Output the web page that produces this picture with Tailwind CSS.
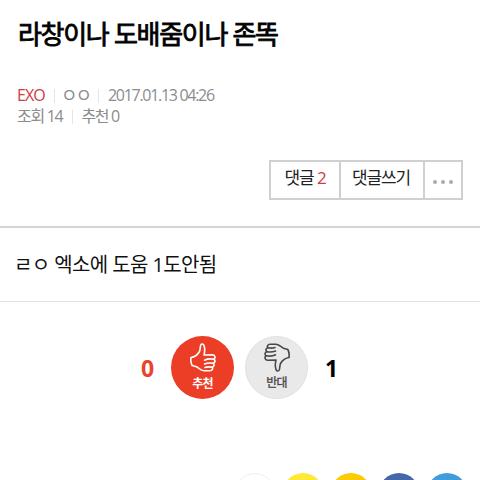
<!DOCTYPE html>
<html lang="ko">
<head>
    <meta charset="UTF-8">
    <meta name="viewport" content="width=device-width, initial-scale=1.0">
    <title>라창이나 도배줌이나 존똑</title>
    <script src="https://cdn.jsdelivr.net/npm/@tailwindcss/browser@4"></script>
</head>
<body class="bg-white font-['Open_Sans','Noto_Sans_CJK_KR',sans-serif] h-[480px] overflow-hidden">
    <!-- 글 제목 -->
    <header class="h-[228px] border-b-2 border-[#d4d4d4] pl-[17px] pr-[17px] pt-[16px]">
        <h1 class="h-[38px] leading-[36px] pl-px text-[26px] font-normal [-webkit-text-stroke:0.8px_#000] tracking-[-1.3px] text-black whitespace-nowrap">라창이나 도배줌이나 존똑</h1>

        <!-- 글 정보 -->
        <div class="mt-[31px] text-[16px] leading-[21px] text-[#8c8c8c] whitespace-nowrap">
            <div class="flex items-center h-[21px]">
                <span class="text-[#d03a42] tracking-[-0.9px]">EXO</span>
                <span class="w-px h-[14px] bg-[#e6e6e6] ml-[9px] mr-[6px]"></span>
                <span class="text-[18px] tracking-[-2px]">ㅇㅇ</span>
                <span class="w-px h-[14px] bg-[#e6e6e6] ml-[8px] mr-[9px]"></span>
                <span class="tracking-[-1.3px]">2017.01.13 04:26</span>
            </div>
            <div class="flex items-center h-[21px] tracking-[-1.3px]">
                <span>조회 14</span>
                <span class="w-px h-[14px] bg-[#e6e6e6] ml-[10px] mr-[8px]"></span>
                <span>추천 0</span>
            </div>
        </div>

        <!-- 댓글 버튼 -->
        <div class="mt-[33px] ml-auto w-[194px] h-[40px] flex border-2 border-[#d0d0d0] text-[17px] leading-[32px] tracking-[-1.1px] text-[#222] whitespace-nowrap">
            <a class="w-[70px] text-center border-r-2 border-[#d0d0d0]">댓글 <span class="text-[#d03a42]">2</span></a>
            <a class="w-[84px] pr-[2px] text-center border-r-2 border-[#d0d0d0]">댓글쓰기</a>
            <a class="flex-1 flex items-center justify-center gap-[4px] pt-[3px]">
                <i class="size-[4px] rounded-full bg-[#aaa]"></i>
                <i class="size-[4px] rounded-full bg-[#aaa]"></i>
                <i class="size-[4px] rounded-full bg-[#aaa]"></i>
            </a>
        </div>
    </header>

    <!-- 본문 -->
    <p class="h-[74px] leading-[74px] border-b border-[#e2e2e2] pl-[14px] text-[20px] tracking-[-0.6px] text-[#111] whitespace-nowrap">ㄹㅇ 엑소에 도움 1도안됨</p>

    <!-- 추천 / 반대 -->
    <section class="flex items-center pt-[34px] pl-[141px] text-[23px] font-bold">
        <span class="w-[30px] pt-[2px] text-[#e8432c]">0</span>
        <button class="size-[63px] rounded-full bg-[#ec3d27] text-white flex flex-col items-center">
            <svg class="w-[26px] h-[29px] mt-[7px]" viewBox="0 0 26 29" fill="none" stroke="currentColor" stroke-width="1.6" stroke-linejoin="round" stroke-linecap="round">
                <path d="M1 14.5 C5 14 8 11 9.5 8.5 C10.5 6 10 4 10.8 2 C11.5 0.5 13.5 0.8 14 2.5 C15 5.5 14.8 9 14 12 L22.5 11.8 C25.5 12 25.8 15.5 23.5 16.2 C25.8 17 25.3 20 23 20.3 C24.8 21.3 24.2 24 22 24.2 C23.3 25.5 22.3 27.8 20 27.8 H14 C10.5 27.5 9 25 6.5 23.7 L2.2 22.5 C0.8 20 0.6 17 1 14.5 Z"/>
                <path d="M23.5 16.2 C20 15.6 17 15.9 14.5 17.2 M23 20.3 C20 19.8 17 20 14.5 21 M22 24.2 C19 23.6 17 23.8 15 24.5"/>
            </svg>
            <span class="text-[12px] leading-[16px] mt-[4px] tracking-[-0.7px]">추천</span>
        </button>
        <button class="size-[63px] rounded-full bg-[#e9e9e9] border border-[#e2e2e2] text-[#484848] flex flex-col items-center ml-[11px]">
            <svg class="w-[26px] h-[29px] mt-[6px] rotate-180" viewBox="0 0 26 29" fill="none" stroke="currentColor" stroke-width="1.6" stroke-linejoin="round" stroke-linecap="round">
                <path d="M1 14.5 C5 14 8 11 9.5 8.5 C10.5 6 10 4 10.8 2 C11.5 0.5 13.5 0.8 14 2.5 C15 5.5 14.8 9 14 12 L22.5 11.8 C25.5 12 25.8 15.5 23.5 16.2 C25.8 17 25.3 20 23 20.3 C24.8 21.3 24.2 24 22 24.2 C23.3 25.5 22.3 27.8 20 27.8 H14 C10.5 27.5 9 25 6.5 23.7 L2.2 22.5 C0.8 20 0.6 17 1 14.5 Z"/>
                <path d="M23.5 16.2 C20 15.6 17 15.9 14.5 17.2 M23 20.3 C20 19.8 17 20 14.5 21 M22 24.2 C19 23.6 17 23.8 15 24.5"/>
            </svg>
            <span class="text-[12px] leading-[16px] mt-[3px] tracking-[-0.7px] font-normal [-webkit-text-stroke:0.3px_#484848]">반대</span>
        </button>
        <span class="ml-[17px] pt-[2px] text-black">1</span>
    </section>

    <!-- 공유 버튼 -->
    <nav class="flex gap-[8px] pl-[235px] mt-[74px] h-[7px] overflow-hidden">
        <a class="size-[40px] shrink-0 rounded-full border border-[#eeeeee]"></a>
        <a class="size-[40px] shrink-0 rounded-full bg-[#fde936]"></a>
        <a class="size-[40px] shrink-0 rounded-full bg-[#fbcb05]"></a>
        <a class="size-[40px] shrink-0 rounded-full bg-[#4467a8]"></a>
        <a class="size-[40px] shrink-0 rounded-full bg-[#429cdc]"></a>
    </nav>
</body>
</html>
